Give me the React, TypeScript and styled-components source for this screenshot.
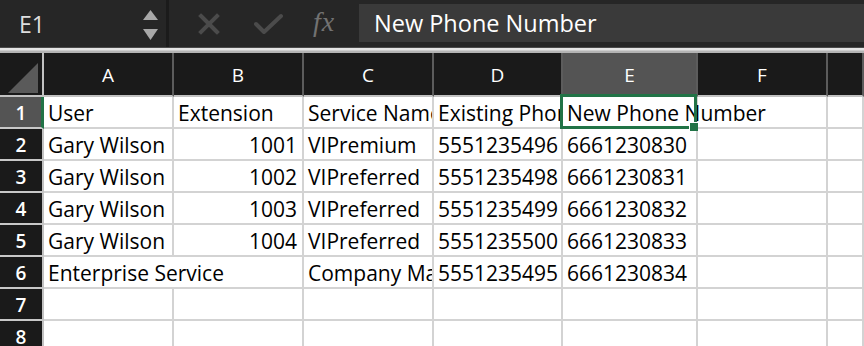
import React from 'react';
import styled, { createGlobalStyle } from 'styled-components';

const GlobalStyle = createGlobalStyle`
  html, body {
    margin: 0;
    padding: 0;
    background: #ffffff;
    overflow: hidden;
  }
  * {
    box-sizing: border-box;
  }
`;

const CELL_FONT = `'Open Sans', 'Liberation Sans', sans-serif`;
const GREEN = '#217346';

const Window = styled.div`
  width: 864px;
  height: 346px;
  display: flex;
  flex-direction: column;
  background: #ffffff;
  overflow: hidden;
`;

const FormulaBar = styled.div`
  height: 47px;
  display: flex;
  align-items: stretch;
  background: #262626;
  flex-shrink: 0;
`;

const NameBox = styled.div`
  width: 166px;
  display: flex;
  align-items: center;
  justify-content: space-between;
  padding: 0 8px 0 19px;
  color: #dedede;
  font-family: ${CELL_FONT};
  font-size: 23px;
`;

const Spinner = styled.div`
  display: flex;
  flex-direction: column;
  gap: 9px;
  padding-top: 2px;
`;

const Divider = styled.div`
  width: 3px;
  background: #1b1b1b;
`;

const Actions = styled.div`
  width: 190px;
  display: flex;
  align-items: center;
  padding-left: 29px;
`;

const ActionSlot = styled.div<{ w: number }>`
  width: ${(p) => p.w}px;
  display: flex;
  align-items: center;
`;

const Fx = styled.span`
  font-family: 'Liberation Serif', serif;
  font-style: italic;
  font-size: 28px;
  color: #727272;
  letter-spacing: 1px;
  margin-top: -3px;
`;

const FormulaInput = styled.div`
  flex: 1;
  margin: 4px 0 5px 0;
  background: #3a3a3a;
  display: flex;
  align-items: center;
  padding-left: 15px;
  color: #ffffff;
  font-family: ${CELL_FONT};
  font-size: 23.5px;
`;

const BarEdge = styled.div`
  height: 6px;
  flex-shrink: 0;
  border-top: 1px solid #4a4a4a;
  background: linear-gradient(#e4e4e4 0, #e4e4e4 2px, #b4b4b4 3px, #b4b4b4 5px);
`;

const Sheet = styled.div`
  display: grid;
  grid-template-columns: 44px 130px 130px 130px 129px 135px 130px 1fr;
  grid-template-rows: 44px;
  grid-auto-rows: 32px;
  background: #ffffff;
`;

const Corner = styled.div`
  background: #1a1a1a;
  border-right: 2px solid #c2c2c2;
  border-bottom: 2px solid #c2c2c2;
  display: flex;
  align-items: flex-end;
  justify-content: flex-end;
  padding: 0 4px 2px 0;
`;

const ColHead = styled.div<{ active?: boolean }>`
  background: ${(p) => (p.active ? '#545454' : '#1a1a1a')};
  border-right: 2px solid #5c5c5c;
  border-bottom: 2px solid #c2c2c2;
  color: #ffffff;
  font-family: ${CELL_FONT};
  font-size: 19px;
  display: flex;
  align-items: center;
  justify-content: center;
  padding-top: 1px;
`;

const RowHead = styled.div<{ active?: boolean }>`
  background: ${(p) => (p.active ? '#545454' : '#1a1a1a')};
  border-right: ${(p) => (p.active ? `3px solid ${GREEN}` : '2px solid #c2c2c2')};
  border-bottom: 2px solid #c8c8c8;
  color: #ffffff;
  font-family: ${CELL_FONT};
  font-weight: 600;
  font-size: 19px;
  display: flex;
  align-items: center;
  justify-content: center;
  padding: 2px 0 0 ${(p) => (p.active ? '1px' : '0')};
`;

const Cell = styled.div<{ align?: 'left' | 'right'; span?: number; spill?: boolean; clear?: boolean }>`
  position: relative;
  grid-column: span ${(p) => p.span ?? 1};
  background: ${(p) => (p.clear ? 'transparent' : '#ffffff')};
  border-right: 2px solid #d3d3d3;
  border-bottom: 2px solid #d3d3d3;
  color: #000000;
  font-family: ${CELL_FONT};
  font-size: 21px;
  line-height: 30px;
  padding: 1px 5px 0 4px;
  white-space: nowrap;
  overflow: ${(p) => (p.spill ? 'visible' : 'hidden')};
  text-align: ${(p) => p.align ?? 'left'};
  z-index: ${(p) => (p.spill ? 1 : 0)};
`;

const Selection = styled.div`
  position: absolute;
  top: -3px;
  left: -3px;
  right: -1px;
  bottom: -2px;
  border: 3px solid ${GREEN};
  pointer-events: none;
  z-index: 2;
`;

const FillHandle = styled.div`
  position: absolute;
  right: -4px;
  bottom: -5px;
  width: 9px;
  height: 9px;
  background: ${GREEN};
  border-left: 1px solid #ffffff;
  border-top: 1px solid #ffffff;
`;

const SpinUp = () => (
  <svg width="15" height="10" viewBox="0 0 15 10">
    <polygon points="7.5,0 15,10 0,10" fill="#a8a8a8" />
  </svg>
);

const SpinDown = () => (
  <svg width="15" height="11" viewBox="0 0 15 11">
    <polygon points="0,0 15,0 7.5,11" fill="#a8a8a8" />
  </svg>
);

const CancelIcon = () => (
  <svg width="22" height="22" viewBox="0 0 22 22">
    <path d="M3 3 L19 19 M19 3 L3 19" stroke="#4b4b4b" strokeWidth="4" strokeLinecap="square" />
  </svg>
);

const EnterIcon = () => (
  <svg width="30" height="22" viewBox="0 0 30 22">
    <path d="M2 11 L10 19 L27 3" stroke="#4b4b4b" strokeWidth="4" fill="none" strokeLinecap="round" strokeLinejoin="round" />
  </svg>
);

const CornerMark = () => (
  <svg width="30" height="30" viewBox="0 0 30 30">
    <polygon points="30,0 30,30 0,30" fill="#5a5a5a" />
  </svg>
);

type CellData = string | { text: string; align?: 'left' | 'right'; span?: number };

const columns = ['A', 'B', 'C', 'D', 'E', 'F', ''];

const rows: CellData[][] = [
  ['User', 'Extension', 'Service Name', 'Existing Phone Number', 'New Phone Number', '', ''],
  ['Gary Wilson', { text: '1001', align: 'right' }, 'VIPremium', '5551235496', '6661230830', '', ''],
  ['Gary Wilson', { text: '1002', align: 'right' }, 'VIPreferred', '5551235498', '6661230831', '', ''],
  ['Gary Wilson', { text: '1003', align: 'right' }, 'VIPreferred', '5551235499', '6661230832', '', ''],
  ['Gary Wilson', { text: '1004', align: 'right' }, 'VIPreferred', '5551235500', '6661230833', '', ''],
  [{ text: 'Enterprise Service', span: 2 }, 'Company Main', '5551235495', '6661230834', '', ''],
  ['', '', '', '', '', '', ''],
  ['', '', '', '', '', '', ''],
];

const App: React.FC = () => (
  <Window>
    <GlobalStyle />
    <FormulaBar>
      <NameBox>
        <span>E1</span>
        <Spinner>
          <SpinUp />
          <SpinDown />
        </Spinner>
      </NameBox>
      <Divider />
      <Actions>
        <ActionSlot w={56}>
          <CancelIcon />
        </ActionSlot>
        <ActionSlot w={59}>
          <EnterIcon />
        </ActionSlot>
        <ActionSlot w={46}>
          <Fx>fx</Fx>
        </ActionSlot>
      </Actions>
      <FormulaInput>New Phone Number</FormulaInput>
    </FormulaBar>
    <BarEdge />
    <Sheet>
      <Corner>
        <CornerMark />
      </Corner>
      {columns.map((c, i) => (
        <ColHead key={`h${i}`} active={c === 'E'}>
          {c}
        </ColHead>
      ))}
      {rows.map((row, r) => (
        <React.Fragment key={`r${r}`}>
          <RowHead active={r === 0}>{r + 1}</RowHead>
          {row.map((cell, c) => {
            const data = typeof cell === 'string' ? { text: cell } : cell;
            const isActive = r === 0 && c === 4;
            return (
              <Cell
                key={`c${r}-${c}`}
                align={data.align}
                span={data.span}
                spill={isActive}
                clear={r === 0 && c === 5}
              >
                {data.text}
                {isActive && (
                  <Selection>
                    <FillHandle />
                  </Selection>
                )}
              </Cell>
            );
          })}
        </React.Fragment>
      ))}
    </Sheet>
  </Window>
);

export default App;
